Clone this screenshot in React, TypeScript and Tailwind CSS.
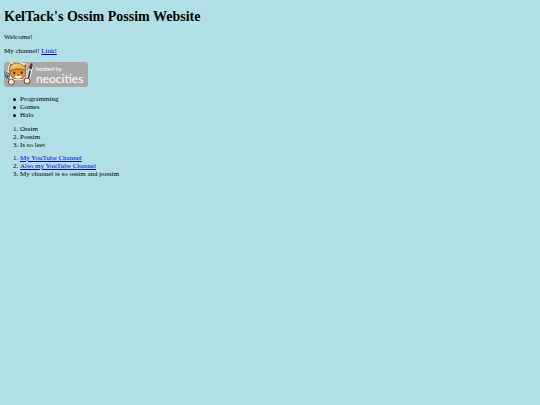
const interests = ["Programming", "Games", "Halo"];
const facts = ["Ossim", "Possim", "Is so leet"];

const channels = [
  { text: "My YouTube Channel", href: "#youtube" },
  { text: "Also my YouTube Channel", href: "#youtube-2" },
  { text: "My channel is so ossim and possim" },
];

function Mascot() {
  return (
    <svg viewBox="0 0 96 75" className="h-[25px] w-8 shrink-0" aria-hidden="true">
      {/* white sticker edge */}
      <g fill="#fff" stroke="#fff" strokeWidth="4" strokeLinejoin="round">
        <path d="M15 14 L20 3 L31 5 Q46 0 56 6 L68 7 L66 22 Q70 40 60 48 Q45 56 27 50 Q14 42 13 28 Z" />
        <path d="M4 30 L11 44 L22 58" fill="none" strokeWidth="10" />
        <path d="M73 50 L83 8" fill="none" strokeWidth="11" />
      </g>
      <path d="M16 24 L20 5 L32 13 L55 11 L67 8 L65 24 Q68 42 58 48 Q42 54 27 48 Q16 40 16 24 Z" fill="#e58f3a" stroke="#5b3a22" strokeWidth="2" />
      <path d="M31 46 Q34 38 42 41 Q49 37 54 45 Q49 50 42 50 Q35 50 31 46 Z" fill="#fff0dc" />
      <path d="M15 28 Q17 9 29 4 Q46 -1 59 11 Q66 18 65 25 Q40 15 15 28 Z" fill="#edbc4c" stroke="#7a5528" strokeWidth="2" />
      <path d="M26 17 Q32 9 41 9" fill="none" stroke="#fbe08d" strokeWidth="3" />
      <path d="M15 28 Q38 16 65 25" fill="none" stroke="#a96d24" strokeWidth="3" />
      <ellipse cx="31" cy="33" rx="3" ry="4" fill="#38251d" />
      <ellipse cx="53" cy="32" rx="3" ry="4" fill="#38251d" />
      <path d="M39 38 L47 38 L43 42 Z" fill="#46302a" />
      {/* fork */}
      <path d="M2 28 L4 41 L11 47 L8 30 M4 41 L20 57 M11 45 L16 44 L14 32" fill="none" stroke="#475b63" strokeWidth="4" />
      {/* paint brush */}
      <path d="M72 55 L79 24" fill="none" stroke="#49302d" strokeWidth="5" />
      <path d="M78 26 L80 17" fill="none" stroke="#b5b5a5" strokeWidth="6" />
      <path d="M76 18 Q77 7 84 4 Q87 13 82 21 Z" fill="#8b1f30" stroke="#4b202a" strokeWidth="2" />
      <circle cx="22" cy="60" r="9" fill="#fff7e8" stroke="#6b4a30" strokeWidth="3" />
      <circle cx="69" cy="57" r="9" fill="#fff7e8" stroke="#6b4a30" strokeWidth="3" />
      <path d="M18 65 Q22 68 26 64 M65 62 Q70 65 74 60" fill="none" stroke="#eab168" strokeWidth="3" />
    </svg>
  );
}

function NeocitiesBadge() {
  return (
    <a
      href="#neocities"
      className="flex h-[25px] w-fit items-center rounded-[3px] bg-[#aaa8a9] pr-[5px] font-[Lato,sans-serif] text-white"
    >
      <Mascot />
      <span className="flex flex-col">
        <span className="text-[6px] leading-[8px]">hosted by</span>
        <span className="text-[12px] leading-[12px]">neocities</span>
      </span>
    </a>
  );
}

export default function App() {
  return (
    <main className="min-h-screen bg-[#b0e0e6] px-1 pt-2 pb-1 font-['Liberation_Serif',serif] text-[7px] leading-[8px] text-black">
      <h1 className="text-[14px] leading-[17px] font-bold">KelTack's Ossim Possim Website</h1>
      <p className="mt-2">Welcome!</p>
      <p className="mt-[6px] mb-[7px]">
        My channel!{" "}
        <a href="#channel" className="text-[#0000ee] underline">Link!</a>
      </p>
      <NeocitiesBadge />

      <ul className="mt-2 pl-[9px]">
        {interests.map((item) => (
          <li key={item} className="flex items-center before:mr-1 before:size-[3px] before:rounded-full before:bg-black">
            {item}
          </li>
        ))}
      </ul>
      <ol className="mt-[6px] list-decimal pl-4">
        {facts.map((item) => (
          <li key={item}>{item}</li>
        ))}
      </ol>
      <ol className="mt-[5px] list-decimal pl-4">
        {channels.map(({ text, href }) => (
          <li key={text}>
            {href ? <a href={href} className="text-[#0000ee] underline">{text}</a> : text}
          </li>
        ))}
      </ol>
    </main>
  );
}
